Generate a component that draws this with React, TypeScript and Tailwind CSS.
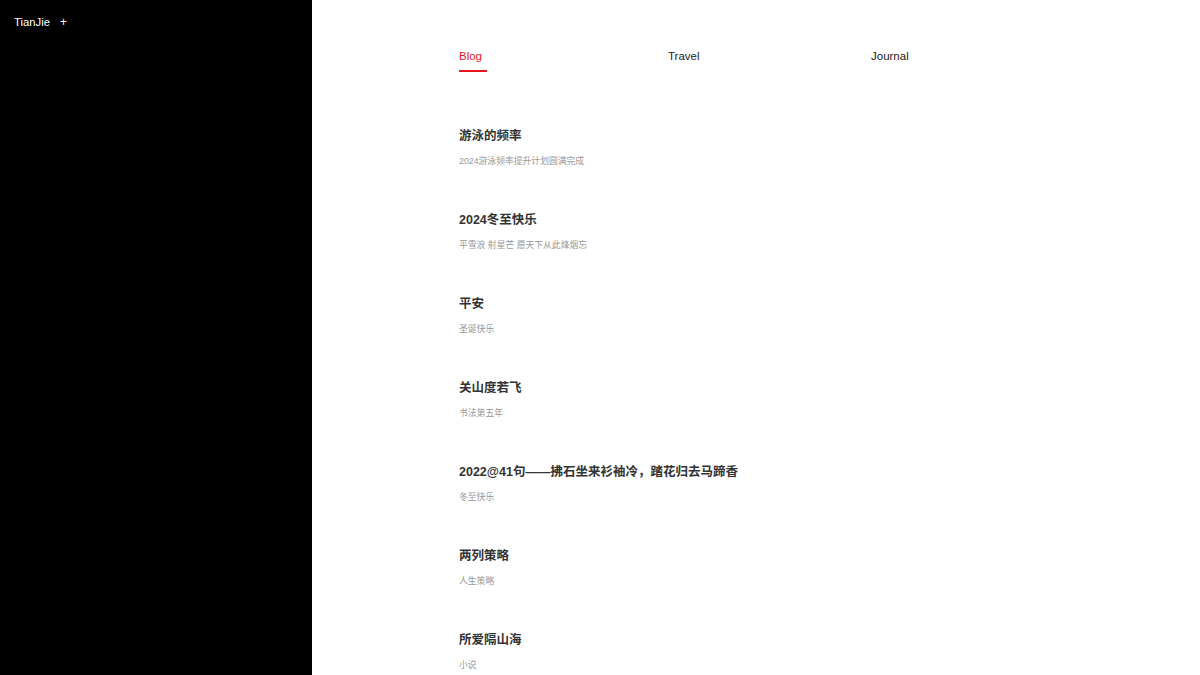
import React from "react";

const posts = [
  { t: "游泳的频率", s: "2024游泳频率提升计划圆满完成" },
  { t: "2024冬至快乐", s: "平雪浪 射星芒 愿天下从此烽烟忘" },
  { t: "平安", s: "圣诞快乐" },
  { t: "关山度若飞", s: "书法第五年" },
  { t: "2022@41句——拂石坐来衫袖冷，踏花归去马蹄香", s: "冬至快乐" },
  { t: "两列策略", s: "人生策略" },
  { t: "所爱隔山海", s: "小说" },
];

export default function App() {
  return (
    <div
      className="flex h-[675px] w-[1200px] overflow-hidden bg-white"
      style={{ fontFamily: '"Liberation Sans", Arial, "Noto Sans CJK SC", sans-serif' }}
    >
      <aside className="h-full w-[312px] shrink-0 bg-black">
        <div className="flex items-center gap-[10px] pl-[14px] pt-[13px] text-[11.3px] text-white">
          <span>TianJie</span>
          <span className="text-[12px]">+</span>
        </div>
      </aside>
      <main className="flex-1">
        <div className="ml-[147px] w-[594px]">
          <nav className="grid grid-cols-[209px_203px_auto] pt-[48px] text-[11.5px] leading-[16px]">
            <div>
              <span className="inline-block border-b-2 border-[#e4161c] pb-[6px] pr-[5px] text-[#e4161c]">Blog</span>
            </div>
            <div className="text-[#222]">Travel</div>
            <div className="text-[#222]">Journal</div>
          </nav>
          <ul className="mt-[54px] flex flex-col gap-[42px]">
            {posts.map((p) => (
              <li key={p.t} className="flex flex-col gap-[8px]">
                <div className="text-[12.5px] font-bold leading-[20px] text-[#333]">{p.t}</div>
                <div className="text-[8.8px] leading-[14px] text-[#999]">{p.s}</div>
              </li>
            ))}
          </ul>
        </div>
      </main>
    </div>
  );
}
